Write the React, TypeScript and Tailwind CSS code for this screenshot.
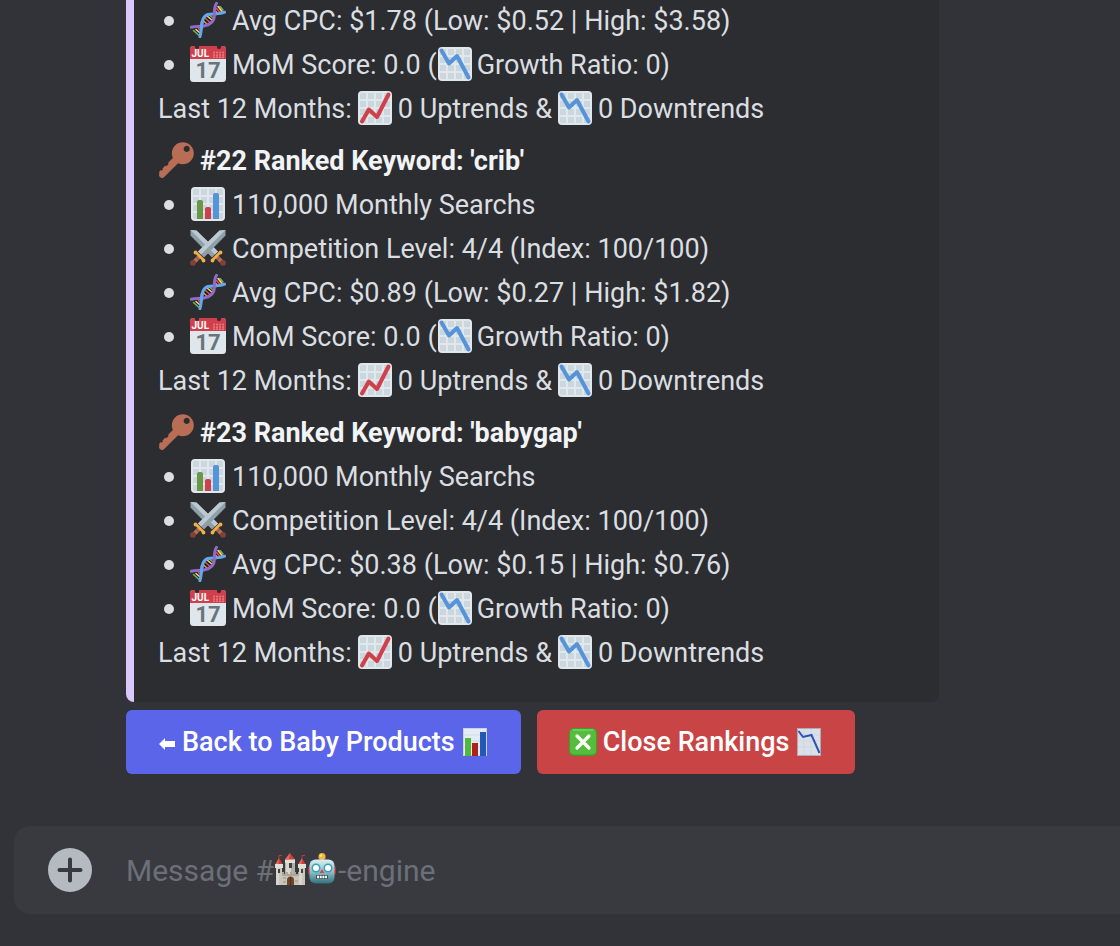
import type { ReactNode } from "react";

function Emoji({ label, children }: { label: string; children: ReactNode }) {
  return (
    <svg role="img" aria-label={label} viewBox="0 0 36 36" className="mb-0.5 size-9 shrink-0">
      {children}
    </svg>
  );
}

function ChartGrid() {
  return (
    <>
      <rect x="1" y="1" width="34" height="34" rx="4" fill="#E1E8ED" />
      <path
        fill="#CCD6DD"
        d="M5 3h4v6H3V5c0-1.100.9-2 2-2zM11 3h6v6h-6zM19 3h6v6h-6zM27 3h4c1.100 0 2 .9 2 2v4h-6zM3 11h6v6H3zM11 11h6v6h-6zM19 11h6v6h-6zM27 11h6v6h-6zM3 19h6v6H3zM11 19h6v6h-6zM19 19h6v6h-6zM27 19h6v6h-6zM3 27h6v6H5c-1.100 0-2-.9-2-2zM11 27h6v6h-6zM19 27h6v6h-6zM27 27h6v4c0 1.100-.9 2-2 2h-4z"
      />
    </>
  );
}

function BarChart() {
  return (
    <Emoji label="Bar chart">
      <ChartGrid />
      <path fill="#6A9745" d="M13 33H7V16c0-1.104.896-2 2-2h2c1.104 0 2 .896 2 2v17z" />
      <path fill="#5594D8" d="M29 33h-6V9c0-1.104.896-2 2-2h2c1.104 0 2 .896 2 2v24z" />
      <path fill="#CF404B" d="M21 33h-6V23c0-1.104.896-2 2-2h2c1.104 0 2 .896 2 2v10z" />
    </Emoji>
  );
}

function Uptrend() {
  return (
    <Emoji label="Chart increasing">
      <ChartGrid />
      <path d="M5 31.500 11.800 19.500 20 27 31.500 4.500" fill="none" stroke="#CF404B" strokeWidth="4" strokeLinecap="round" strokeLinejoin="round" />
    </Emoji>
  );
}

function Downtrend() {
  return (
    <Emoji label="Chart decreasing">
      <ChartGrid />
      <path d="M4.500 4.500 12 17.500 20 10 31.500 31.500" fill="none" stroke="#5594D8" strokeWidth="4" strokeLinecap="round" strokeLinejoin="round" />
    </Emoji>
  );
}

function Key() {
  return (
    <Emoji label="Key">
      <path
        fill="#B96D54"
        d="M32.614 3.414C28.31-.89 21.332-.89 17.027 3.414c-3.391 3.392-4.098 8.439-2.144 12.535l-3.916 3.915c-.64.641-.841 1.543-.625 2.359l-1.973 1.972c-.479-.48-1.252-.48-1.731 0l-1.731 1.732c-.479.479-.479 1.253 0 1.732l-.867.864c-.479-.478-1.253-.478-1.731 0l-.866.867c-.479.479-.479 1.253 0 1.732.015.016.036.02.051.033-.794 1.189-.668 2.812.382 3.863 1.195 1.195 3.134 1.195 4.329 0L20.08 21.144c4.097 1.955 9.144 1.247 12.535-2.146 4.302-4.302 4.302-11.28-.001-15.584zm-1.731 5.629c-1.194 1.195-3.134 1.195-4.329 0-1.194-1.195-1.195-3.134 0-4.329 1.195-1.195 3.135-1.195 4.329 0 1.195 1.195 1.195 3.134 0 4.329z"
      />
    </Emoji>
  );
}

function SwordHalf() {
  return (
    <>
      <path fill="#8FA0AB" d="M35.500 0v5.500L14 27.500l-6-6L29.500.5z" />
      <path fill="#BCC9D1" d="M35.500 0 11 24.500l-3-3L29.500.5z" />
      <path d="M10.500 25.500 4.500 31.500" stroke="#B96D54" strokeWidth="4" />
      <path d="m8 25 3 3M6 27l3 3" stroke="#8A4B38" strokeWidth="1" />
      <path d="M6 22.500 13.500 30" stroke="#F2AE45" strokeWidth="2.600" strokeLinecap="round" />
      <circle cx="5.500" cy="22.500" r="1.900" fill="#F2AE45" />
      <circle cx="13.500" cy="30.500" r="1.900" fill="#F2AE45" />
      <circle cx="3" cy="32.800" r="2.900" fill="#7D4433" />
    </>
  );
}

function Swords() {
  return (
    <Emoji label="Crossed swords">
      <g transform="matrix(-1 0 0 1 36 0)">
        <SwordHalf />
      </g>
      <SwordHalf />
    </Emoji>
  );
}

function Dna() {
  return (
    <Emoji label="DNA">
      <path d="M3 26h8v8zM13 14l5-1h6v4l-3 5-8 2zM25 3l9 8h-8z" fill="#1A1B1F" />
      <g strokeWidth="1.600" strokeLinecap="round">
        <path stroke="#77B255" d="m3.500 28.500 5 4.500M20 13.500l3 2.500M30 4.500l3 3.500" />
        <path stroke="#F5D98A" d="m6 27.500 4 3.500M17 14l5.500 4.500M28 4.500l4 5" />
        <path stroke="#DD5360" d="m8.500 26.500 2 2M14.500 15.500l5.500 5M26.500 6.500l3.500 4" />
        <path stroke="#E8A04A" d="m13.500 19 3.500 3M25.500 9l1.500 2" />
      </g>
      <path d="M10 34.700C11 31 11 29 11.500 25 12 19 13 12.500 20 12.300 26 12.200 30 12 34.700 10.200" fill="none" stroke="#65A8E8" strokeWidth="3" strokeLinecap="round" />
      <path d="M1.300 25.200C6 24 9 25 14 24 20 22.700 24.500 20 24.300 13.500 24.200 8 24 5.500 26.500 1.300" fill="none" stroke="#9369C8" strokeWidth="3" strokeLinecap="round" />
      <path d="M11.300 27c.300-3.500.400-6 1.200-8.500" fill="none" stroke="#65A8E8" strokeWidth="3" />
    </Emoji>
  );
}

function Calendar() {
  return (
    <Emoji label="Calendar">
      <rect width="36" height="36" rx="3.500" fill="#E0E7EC" />
      <path fill="#CF404B" d="M0 13V3C0 1.300 1.300 0 3 0h30c1.700 0 3 1.300 3 3v10z" />
      <circle cx="7" cy="1" r="2" fill="#2b2d31" />
      <circle cx="29" cy="1" r="2" fill="#2b2d31" />
      <path stroke="#E88790" strokeWidth="1.400" strokeDasharray="1.700 1.300" d="M23.200 6.500H35M23.200 9H35M23.200 11.300H35" />
      <text x="1.500" y="11.300" fill="#fff" className="font-['Roboto',sans-serif] text-[10px] font-bold">JUL</text>
      <text x="18" y="32" textAnchor="middle" fill="#66757F" className="font-['Roboto',sans-serif] text-[22px] font-bold">17</text>
    </Emoji>
  );
}

function ButtonBars() {
  return (
    <svg role="img" aria-label="Bar chart" viewBox="0 0 28 30" className="h-[30px] w-7 shrink-0">
      <rect x="2" y="1" width="24" height="28" fill="#C9D3E0" />
      <rect x="3" y="2" width="22" height="26" fill="#E4EBF3" />
      <path d="M3 8h22M3 14h22M3 20h22" stroke="#D3DCE7" />
      <rect x="4" y="11" width="6" height="18" fill="#52B83A" />
      <rect x="11" y="16" width="6" height="13" fill="#AE2219" />
      <rect x="19" y="5" width="6" height="24" fill="#2159B5" />
    </svg>
  );
}

function ButtonTrend() {
  return (
    <svg role="img" aria-label="Chart decreasing" viewBox="0 0 28 30" className="h-[30px] w-7 shrink-0">
      <rect x="2" y="1" width="24" height="28" fill="#B5A9B5" />
      <rect x="3" y="2" width="22" height="26" fill="#DAE0E8" />
      <path d="M3 8h22M3 14h22M3 20h22M9 2v26M16 2v26" stroke="#D0D7E0" />
      <path d="M3.500 4 8 10l8.500-2L24.500 26" fill="none" stroke="#2756B8" strokeWidth="2" />
    </svg>
  );
}

function CrossMark() {
  return (
    <svg role="img" aria-label="Cross mark" viewBox="0 0 28 28" className="size-7 shrink-0">
      <rect width="28" height="28" rx="5" fill="#3C9E2C" />
      <rect x="1" y="1" width="26" height="25.500" rx="4" fill="#55BD3C" />
      <path d="M4 2h20" stroke="#8ADB70" strokeLinecap="round" />
      <path d="m8 8 12 12M20 8 8 20" stroke="#fff" strokeWidth="3.200" strokeLinecap="round" />
    </svg>
  );
}

function Castle() {
  return (
    <svg role="img" aria-label="Castle" viewBox="0 0 32 34" className="h-[34px] w-8 shrink-0">
      <path fill="#C9C6BC" d="M2 12h6v20H2zM25 12h6v20h-6z" />
      <path fill="#B3B0A6" d="M11 8h10v14H11z" />
      <path fill="#D8D5CC" d="M12 8h5v14h-5zM2 12h3v20H2zM25 12h3v20h-3z" />
      <path fill="#AAA79D" d="M8 19h2v2h2v-2h2v2h2v-2h2v2h2v-2h2v2h2v-2h1v13H8z" />
      <path fill="#C8C5BB" d="M8 23h17v9H8z" />
      <path fill="#E2DFD6" d="M1 11h8v4H1zM24 11h8v4h-8zM11 6h10v4H11z" />
      <path fill="#C9403A" d="m5 5 3.500 6h-7zM28 5l3.500 6h-7zM16 0l5 6.500H11z" />
      <path fill="#E36A61" d="m5 5-.500 6h-3zM28 5l-.500 6h-3zM16 0l-1 6.500h-4z" />
      <path stroke="#B93A37" d="M5 6V2.500h3M28 6V2.500h3" fill="none" />
      <path fill="#44423F" d="M4 16h2v4H4zM27 16h2v4h-2zM15 10h3v5h-3z" />
      <path fill="#754429" d="M13 32v-5a3.500 3.500 0 0 1 7 0v5z" />
      <path d="M16.500 24v8" stroke="#4F2B1B" />
      <path d="M9 25h3M21 28h3M9 29h3" stroke="#96938A" />
    </svg>
  );
}

function Robot() {
  return (
    <svg role="img" aria-label="Robot" viewBox="0 0 32 34" className="h-[34px] w-8 shrink-0">
      <defs>
        <linearGradient id="robot-face" x1="0" y1="0" x2="0" y2="1">
          <stop offset="0" stopColor="#D8F1F2" />
          <stop offset="0.5" stopColor="#8FC1C8" />
          <stop offset="1" stopColor="#32727F" />
        </linearGradient>
      </defs>
      <rect x="2" y="13" width="28" height="9" rx="2" fill="#B9343A" />
      <path fill="#6C3D79" d="M12 4h8v4h-8z" />
      <circle cx="16" cy="3.500" r="3.500" fill="#F5B43A" />
      <circle cx="15" cy="2.500" r="1.300" fill="#FFE88D" />
      <rect x="3.500" y="6.500" width="25" height="24" rx="6" fill="url(#robot-face)" />
      <circle cx="10" cy="15" r="4.500" fill="#399FC2" />
      <circle cx="22" cy="15" r="4.500" fill="#399FC2" />
      <circle cx="10" cy="15" r="3" fill="#fff" />
      <circle cx="22" cy="15" r="3" fill="#fff" />
      <path fill="#D74947" d="m16 16 2.500 4h-5z" />
      <rect x="10" y="22" width="12" height="4" rx="1" fill="#394C55" />
      <path d="M11 24h10" stroke="#fff" strokeWidth="2.500" strokeDasharray="2 .700" />
    </svg>
  );
}

function Bullet({ icon, children }: { icon: ReactNode; children: ReactNode }) {
  return (
    <li className="flex h-11 items-center">
      <span aria-hidden="true" className="mr-4 ml-1.5 size-2.5 rounded-full bg-[#dbdee1]" />
      <span className="mr-1.5">{icon}</span>
      {children}
    </li>
  );
}

type Entry = {
  title?: string;
  searches?: string;
  competition?: string;
  cpc: string;
};

const entries: Entry[] = [
  { cpc: "Avg CPC: $1.78 (Low: $0.52 | High: $3.58)" },
  {
    title: "#22 Ranked Keyword: 'crib'",
    searches: "110,000 Monthly Searchs",
    competition: "Competition Level: 4/4 (Index: 100/100)",
    cpc: "Avg CPC: $0.89 (Low: $0.27 | High: $1.82)",
  },
  {
    title: "#23 Ranked Keyword: 'babygap'",
    searches: "110,000 Monthly Searchs",
    competition: "Competition Level: 4/4 (Index: 100/100)",
    cpc: "Avg CPC: $0.38 (Low: $0.15 | High: $0.76)",
  },
];

function Keyword({ entry }: { entry: Entry }) {
  return (
    <section>
      {entry.title && (
        <h3 className="flex h-11 items-center gap-1.5 font-bold text-[#f2f3f5]">
          <Key />
          {entry.title}
        </h3>
      )}
      <ul>
        {entry.searches && <Bullet icon={<BarChart />}>{entry.searches}</Bullet>}
        {entry.competition && <Bullet icon={<Swords />}>{entry.competition}</Bullet>}
        <Bullet icon={<Dna />}>{entry.cpc}</Bullet>
        <Bullet icon={<Calendar />}>
          MoM Score: 0.0 (<Downtrend />
          <span className="ml-1">Growth Ratio: 0)</span>
        </Bullet>
      </ul>
      <p className="flex h-11 items-center gap-[5px]">
        Last 12 Months: <Uptrend /> 0 Uptrends &amp; <Downtrend /> 0 Downtrends
      </p>
    </section>
  );
}

export default function App() {
  return (
    <main className="min-h-screen overflow-hidden bg-[#313338] font-['Roboto','Noto_Sans',sans-serif] text-[27px] text-[#dbdee1]">
      <article className="-mt-px mr-[181px] ml-[126px] flex flex-col gap-2 rounded-b-lg border-l-8 border-[#d9c8fa] bg-[#2b2d31] pb-[27px] pl-6 whitespace-nowrap">
        {entries.map((entry) => (
          <Keyword key={entry.cpc} entry={entry} />
        ))}
      </article>

      <div className="mt-2 ml-[126px] flex gap-4 font-medium whitespace-nowrap text-white">
        <button type="button" className="flex h-16 items-center gap-1.5 rounded-md bg-[#5a65ea] px-8">
          <svg aria-hidden="true" viewBox="0 0 18 14" className="mt-1 h-3.5 w-[18px]" fill="currentColor">
            <path d="M1 7 7 1v3h10v6H7v3z" />
          </svg>
          Back to Baby Products
          <ButtonBars />
        </button>
        <button type="button" className="flex h-16 items-center gap-1.5 rounded-md bg-[#c94545] px-8">
          <CrossMark />
          Close Rankings
          <ButtonTrend />
        </button>
      </div>

      <form className="mt-[52px] ml-3.5 flex h-22 items-center rounded-l-2xl bg-[#383a40] pl-[34px] text-[30px]" onSubmit={(e) => e.preventDefault()}>
        <button type="button" aria-label="Add attachment" className="size-11 shrink-0 rounded-full bg-[#b5bac1]">
          <svg aria-hidden="true" viewBox="0 0 44 44" className="size-11">
            <path d="M22 11.500v21M11.500 22h21" stroke="#383a40" strokeWidth="4" strokeLinecap="round" />
          </svg>
        </button>
        <div className="ml-[34px] grid flex-1 items-center">
          <input
            aria-label="Message channel"
            placeholder=" "
            className="peer col-start-1 row-start-1 h-12 w-full bg-transparent outline-none"
          />
          <span className="pointer-events-none invisible col-start-1 row-start-1 flex items-center text-[#6d6f78] peer-placeholder-shown:visible">
            Message #<Castle /><Robot />-engine
          </span>
        </div>
      </form>
    </main>
  );
}
